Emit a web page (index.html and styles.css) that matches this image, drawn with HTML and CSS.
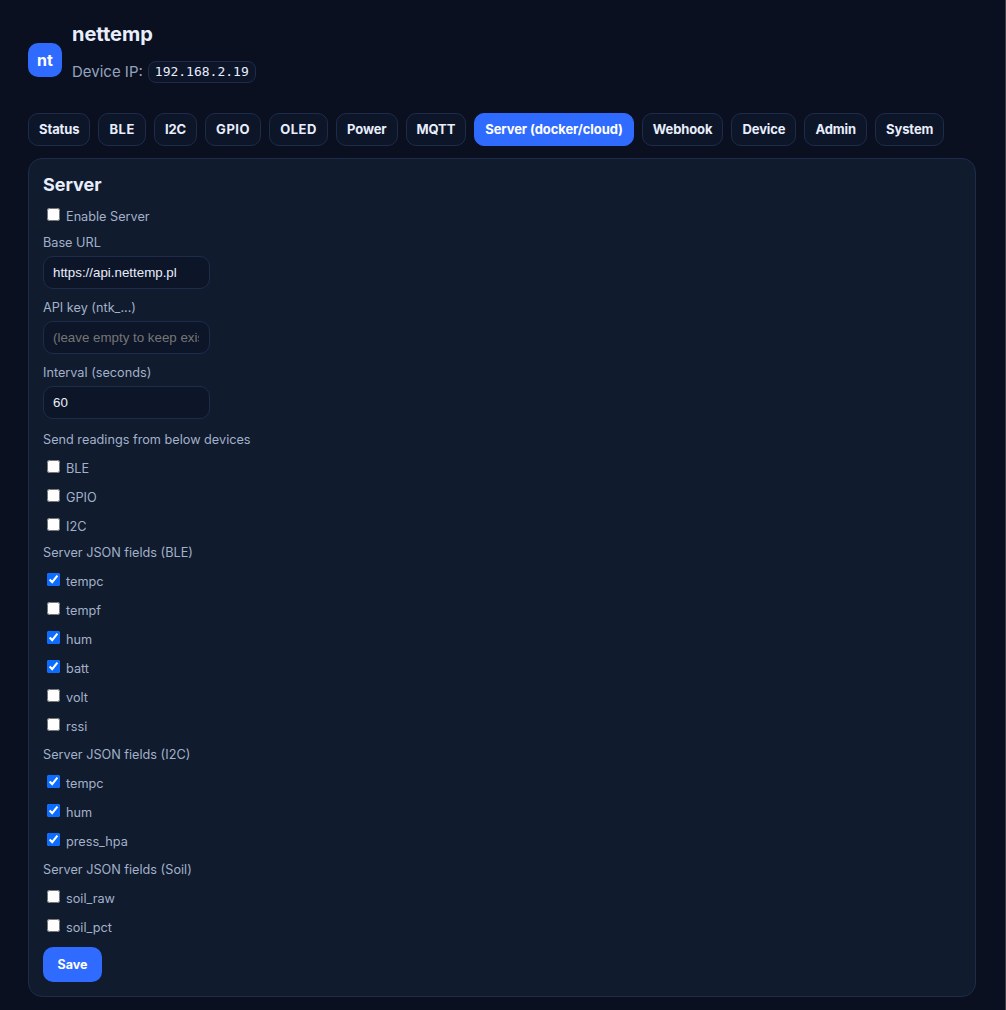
FILE: index.html
```html
<!DOCTYPE html>
<html lang="en">
<head>
<meta charset="utf-8">
<title>nettemp</title>
<link rel="stylesheet" href="styles.css">
</head>
<body>
<div class="app">
  <header class="top">
    <div class="logo">nt</div>
    <div class="brand">
      <div class="name">nettemp</div>
      <div class="ip">Device IP: <code class="ipval">192.168.2.19</code></div>
    </div>
  </header>
  <nav class="tabs">
    <button class="tab">Status</button>
    <button class="tab caps">BLE</button>
    <button class="tab">I2C</button>
    <button class="tab caps">GPIO</button>
    <button class="tab caps">OLED</button>
    <button class="tab">Power</button>
    <button class="tab">MQTT</button>
    <button class="tab active">Server (docker/cloud)</button>
    <button class="tab">Webhook</button>
    <button class="tab">Device</button>
    <button class="tab">Admin</button>
    <button class="tab">System</button>
  </nav>
  <section class="card">
    <h2 class="title">Server</h2>
    <label class="check first"><input type="checkbox">Enable Server</label>
    <label class="lbl base" for="url">Base URL</label>
    <input class="field" id="url" type="text" value="https://api.nettemp.pl">
    <label class="lbl gap" for="key">API key (ntk_...)</label>
    <input class="field" id="key" type="text" placeholder="(leave empty to keep existing)">
    <label class="lbl gap" for="int">Interval (seconds)</label>
    <input class="field" id="int" type="text" value="60">
    <div class="lbl sec">Send readings from below devices</div>
    <label class="check"><input type="checkbox">BLE</label>
    <label class="check"><input type="checkbox">GPIO</label>
    <label class="check"><input type="checkbox">I2C</label>
    <div class="lbl group tight">Server JSON fields (BLE)</div>
    <label class="check"><input type="checkbox" checked>tempc</label>
    <label class="check"><input type="checkbox">tempf</label>
    <label class="check"><input type="checkbox" checked>hum</label>
    <label class="check"><input type="checkbox" checked>batt</label>
    <label class="check"><input type="checkbox">volt</label>
    <label class="check"><input type="checkbox">rssi</label>
    <div class="lbl group">Server JSON fields (I2C)</div>
    <label class="check"><input type="checkbox" checked>tempc</label>
    <label class="check"><input type="checkbox" checked>hum</label>
    <label class="check"><input type="checkbox" checked>press_hpa</label>
    <div class="lbl group">Server JSON fields (Soil)</div>
    <label class="check"><input type="checkbox">soil_raw</label>
    <label class="check"><input type="checkbox">soil_pct</label>
    <button class="save">Save</button>
  </section>
</div>
</body>
</html>
```
FILE: styles.css
```css
* { box-sizing: border-box; }
html, body { margin: 0; height: 100%; }
body {
  background: #0a1020;
  color: #e8eefc;
  font-family: Inter, "Liberation Sans", sans-serif;
  font-size: 13px;
  overflow: hidden;
  border-right: 1px solid #3d3f44;
}
.app { padding: 22px 29px 0 28px; }
.top { display: flex; align-items: center; gap: 10px; height: 76px; }
.logo {
  width: 34px; height: 34px; border-radius: 10px;
  background: #2f6bff; color: #fff;
  display: flex; align-items: center; justify-content: center;
  font-size: 16px; font-weight: 700;
}
.brand { display: flex; flex-direction: column; gap: 15px; padding-bottom: 15px; }
.name { font-size: 20px; font-weight: 700; line-height: 24px; }
.ip { font-size: 15px; line-height: 22px; color: #94a3bd; display: flex; align-items: center; gap: 5px; }
.ipval {
  font-family: "DejaVu Sans Mono", monospace; font-size: 13px; color: #e8eefc;
  border: 1px solid #1e2c4a; border-radius: 8px; padding: 1px 6px; background: #0d1528; line-height: 18px;
}
.tabs { display: flex; gap: 8px; margin-top: 15px; }
.tab {
  height: 33px; padding: 0 10px 1px; border-radius: 10px;
  border: 1px solid #1e2c4a; background: #0d1528; color: #e8eefc;
  font: 700 13px Inter, sans-serif;
  letter-spacing: -0.1px;
}
.tab.caps { letter-spacing: 0.55px; }
.tab.active { background: #2f6bff; border-color: #2f6bff; color: #fff; }
.card {
  margin-top: 12px; padding: 14px;
  background: #101b2e; border: 1px solid #1e2c4a; border-radius: 14px;
  display: flex; flex-direction: column; align-items: flex-start;
}
.title { margin: 0; font-size: 18px; font-weight: 700; line-height: 24px; }
.check {
  display: flex; align-items: center; height: 29px; color: #a3b1c9; font-size: 12.7px;
}
.check input { margin: 0 6px 4px 4px; width: 13px; height: 13px; accent-color: #0b6cff; }
.first { margin-top: 5px; }
.lbl { color: #a3b1c9; font-size: 12.7px; line-height: 16px; }
.base { margin-top: 4px; }
.gap { margin-top: 11px; }
.sec { margin-top: 13px; margin-bottom: 6px; }
.group { margin-top: 6px; margin-bottom: 7px; line-height: 15px; }
.tight { margin-top: 4px; }
.field {
  margin-top: 5px; width: 167px; height: 33px; padding: 0 10px 0 9px;
  background: #0d1528; border: 1px solid #1e2c4a; border-radius: 10px;
  color: #e8eefc; font: 13.33px "Liberation Sans", sans-serif; outline: none;
}
.field::placeholder { color: #757575; }
.save {
  margin-top: 5px; width: 59px; height: 35px; border: 0; border-radius: 10px;
  background: #2f6bff; color: #fff; font: 700 12.5px Inter, sans-serif;
}
```
